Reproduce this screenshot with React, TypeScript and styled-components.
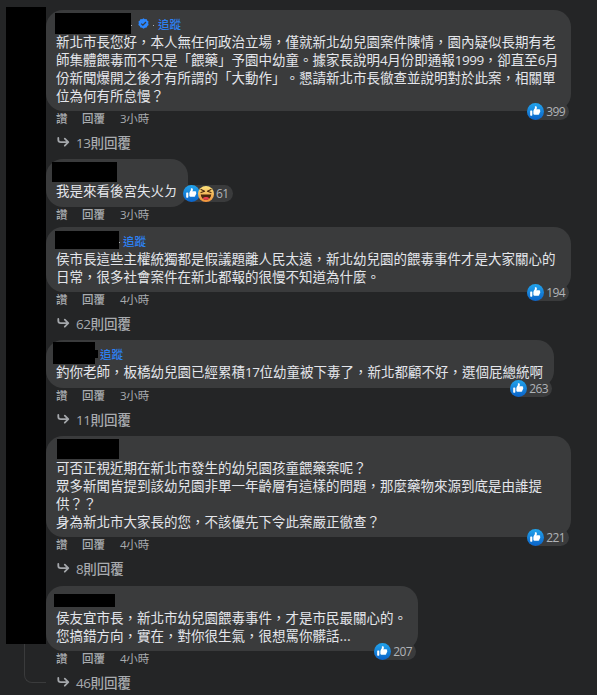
import styled, { createGlobalStyle } from "styled-components";

type Redact = { x: number; y: number; w: number; h: number };

type CommentData = {
  id: number;
  width: number;
  redact: Redact;
  notch?: boolean;
  verified?: boolean;
  dot?: boolean;
  follow?: boolean;
  lines: string[];
  time: string;
  likes: number;
  haha?: boolean;
  replies?: number;
};

const comments: CommentData[] = [
  {
    id: 1,
    width: 525,
    redact: { x: 9, y: 3, w: 76, h: 21 },
    verified: true,
    dot: true,
    follow: true,
    lines: [
      "新北市長您好，本人無任何政治立場，僅就新北幼兒園案件陳情，園內疑似長期有老",
      "師集體餵毒而不只是「餵藥」予園中幼童。據家長說明4月份即通報1999，卻直至6月",
      "份新聞爆開之後才有所謂的「大動作」。懇請新北市長徹查並說明對於此案，相關單",
      "位為何有所怠慢？",
    ],
    time: "3小時",
    likes: 399,
    replies: 13,
  },
  {
    id: 2,
    width: 142,
    redact: { x: 6, y: 3, w: 65, h: 20 },
    lines: ["我是來看後宮失火ㄉ"],
    time: "3小時",
    likes: 61,
    haha: true,
  },
  {
    id: 3,
    width: 525,
    redact: { x: 9, y: 4, w: 64, h: 18 },
    dot: true,
    follow: true,
    lines: [
      "侯市長這些主權統獨都是假議題離人民太遠，新北幼兒園的餵毒事件才是大家關心的",
      "日常，很多社會案件在新北都報的很慢不知道為什麼。",
    ],
    time: "4小時",
    likes: 194,
    replies: 62,
  },
  {
    id: 4,
    width: 508,
    redact: { x: 7, y: 2, w: 42, h: 22 },
    notch: true,
    follow: true,
    lines: ["釣你老師，板橋幼兒園已經累積17位幼童被下毒了，新北都顧不好，選個屁總統啊"],
    time: "3小時",
    likes: 263,
    replies: 11,
  },
  {
    id: 5,
    width: 525,
    redact: { x: 11, y: 3, w: 62, h: 20 },
    lines: [
      "可否正視近期在新北市發生的幼兒園孩童餵藥案呢？",
      "眾多新聞皆提到該幼兒園非單一年齡層有這樣的問題，那麼藥物來源到底是由誰提",
      "供？？",
      "身為新北市大家長的您，不該優先下令此案嚴正徹查？",
    ],
    time: "4小時",
    likes: 221,
    replies: 8,
  },
  {
    id: 6,
    width: 372,
    redact: { x: 8, y: 8, w: 61, h: 13 },
    lines: [
      "侯友宜市長，新北市幼兒園餵毒事件，才是市民最關心的。",
      "您搞錯方向，實在，對你很生氣，很想罵你髒話...",
    ],
    time: "4小時",
    likes: 207,
    replies: 46,
  },
];

export default function App() {
  return (
    <>
      <GlobalStyle />
      <Page>
        <Side>
          <AvatarBlock />
          <ThreadLine />
        </Side>
        <List>
          {comments.map((c) => (
            <Comment key={c.id} data={c} />
          ))}
        </List>
      </Page>
    </>
  );
}

function Comment({ data }: { data: CommentData }) {
  return (
    <Item $last={data.id === 5}>
      <Bubble $width={data.width}>
        <Header>
          <Name $r={data.redact}>{data.notch && <Notch />}</Name>
          {data.dot && <Dot />}
          {data.verified && (
            <>
              <VerifiedIcon />
              <Dot />
            </>
          )}
          {data.follow && <Follow>追蹤</Follow>}
        </Header>
        {data.lines.map((line) => (
          <Line key={line}>
            <Mixed text={line} />
          </Line>
        ))}
        <Reactions $side={data.haha}>
          <LikeIcon id={data.id} />
          {data.haha && <HahaIcon />}
          <Count>{data.likes}</Count>
        </Reactions>
      </Bubble>
      <Meta>
        <Action $w={26}>讚</Action>
        <Action $w={38}>回覆</Action>
        <span>
          <Mixed text={data.time} />
        </span>
      </Meta>
      {data.replies ? (
        <Replies>
          <ArrowIcon />
          <span>
            <Mixed text={`${data.replies}則回覆`} />
          </span>
        </Replies>
      ) : (
        <Spacer />
      )}
    </Item>
  );
}

// Digits use a narrower latin face than the CJK text around them
function Mixed({ text }: { text: string }) {
  return (
    <>
      {text
        .split(/(\d+)/)
        .map((part, i) => (/^\d+$/.test(part) ? <Num key={i}>{part}</Num> : part))}
    </>
  );
}

function VerifiedIcon() {
  return (
    <Verified viewBox="0 0 12 12">
      <path
        fill="#2d88ff"
        d="M6 .4 7.5 1.3 9.3 1.2 10 2.8 11.5 3.9 11.1 5.7 11.6 7.5 10.2 8.7 9.5 10.4 7.7 10.5 6 11.6 4.4 10.5 2.6 10.4 1.9 8.7.4 7.5.9 5.7.5 3.9 2 2.8 2.8 1.2 4.5 1.3Z"
      />
      <path d="M3.5 6.1 5.3 7.8 8.7 4.3" fill="none" stroke="#3a3b3c" strokeWidth="1.4" />
    </Verified>
  );
}

function LikeIcon({ id }: { id: number }) {
  return (
    <Face viewBox="0 0 16 16">
      <defs>
        <linearGradient id={`like${id}`} x1="0" y1="0" x2="0" y2="1">
          <stop offset="0" stopColor="#22a4ec" />
          <stop offset="1" stopColor="#0a62c8" />
        </linearGradient>
      </defs>
      <circle cx="8" cy="8" r="8" fill={`url(#like${id})`} />
      <path
        fill="#fff"
        d="M12.162 7.338c.176.123.338.245.338.674 0 .43-.229.604-.474.725.1.163.132.36.089.546-.077.344-.392.611-.672.69.121.194.159.385.015.62-.185.295-.346.407-1.058.407H7.5c-.988 0-1.5-.546-1.5-1V7.665c0-1.23 1.467-2.275 1.467-3.13L7.361 3.47c-.005-.065.008-.224.058-.27.08-.079.301-.2.635-.2.218 0 .363.041.534.123.581.277.732.978.732 1.542 0 .271-.414 1.083-.47 1.364 0 0 .867-.192 1.879-.199 1.061-.006 1.749.19 1.749.842 0 .261-.219.523-.316.666zM3.6 7h.8a.6.6 0 0 1 .6.6v3.8a.6.6 0 0 1-.6.6h-.8a.6.6 0 0 1-.6-.6V7.6a.6.6 0 0 1 .6-.6z"
      />
    </Face>
  );
}

function HahaIcon() {
  return (
    <Face viewBox="0 0 16 16" $over>
      <defs>
        <linearGradient id="haha" x1="0" y1="0" x2="0" y2="1">
          <stop offset="0" stopColor="#fbe27c" />
          <stop offset="1" stopColor="#f0913a" />
        </linearGradient>
      </defs>
      <circle cx="8" cy="8" r="8" fill="url(#haha)" />
      <path d="M2.8 8.2c.2 3.6 2.6 5.6 5.2 5.6s5-2 5.2-5.6c-1.5.5-8.9.5-10.4 0Z" fill="#4b280e" />
      <path d="M4.7 12.2c1.6-1.7 5-1.7 6.6 0-1.6 2.1-5 2.1-6.6 0Z" fill="#e8404f" />
      <path
        d="M3 3.4 6.6 5.2 3 6.6M13 3.4 9.4 5.2 13 6.6"
        fill="none"
        stroke="#4b280e"
        strokeWidth="1.1"
        strokeLinecap="round"
        strokeLinejoin="round"
      />
    </Face>
  );
}

function ArrowIcon() {
  return (
    <Arrow viewBox="0 0 13 12">
      <path
        d="M1.3 2V3.8Q1.300 6.200 3.800 6.200H11M7.800 2.700 11.300 6.200 7.800 9.700"
        fill="none"
        stroke="#a4a7ab"
        strokeWidth="1.8"
        strokeLinejoin="round"
        strokeLinecap="round"
      />
    </Arrow>
  );
}

const GlobalStyle = createGlobalStyle`
  body {
    margin: 0;
    background: #242526;
    font-family: "Noto Sans CJK TC", sans-serif;
    text-spacing-trim: space-all;
  }
`;

const Page = styled.div`
  display: flex;
  box-sizing: border-box;
  height: 695px;
  padding: 7px 0 0 6px;
  overflow: hidden;
  background: #242526;
`;

const Side = styled.div`
  display: flex;
  flex-direction: column;
  align-items: flex-end;
  width: 40px;
`;

const AvatarBlock = styled.div`
  width: 40px;
  height: 637px;
  background: #000;
`;

const ThreadLine = styled.div`
  box-sizing: border-box;
  width: 22px;
  height: 39px;
  border: solid #3a3b3c;
  border-width: 0 0 1px 1px;
  border-bottom-left-radius: 8px;
`;

const List = styled.div`
  padding-top: 3px;
`;

const Item = styled.div<{ $last?: boolean }>`
  margin-bottom: ${(p) => (p.$last ? "1px" : 0)};
`;

const Bubble = styled.div<{ $width: number }>`
  position: relative;
  box-sizing: border-box;
  width: ${(p) => p.$width}px;
  min-height: 48px;
  padding: 0 0 7px 10px;
  border-radius: 17px;
  background: #3a3b3c;
`;

const Header = styled.div`
  display: flex;
  align-items: flex-start;
  height: 22px;
  margin-left: -10px;
`;

const Name = styled.div<{ $r: Redact }>`
  display: flex;
  justify-content: flex-end;
  align-items: center;
  flex-shrink: 0;
  width: ${(p) => p.$r.w}px;
  height: ${(p) => p.$r.h}px;
  margin: ${(p) => p.$r.y}px 0 0 ${(p) => p.$r.x}px;
  background: #000;
`;

const Notch = styled.div`
  flex-shrink: 0;
  width: 3px;
  height: 8px;
  margin: 2px -3px 0 0;
  background: #000;
`;

const Dot = styled.span`
  width: 1px;
  height: 1px;
  margin: 15px 1px 0 0;
  background: #b0b3b8;

  svg + & {
    margin: 15px 2px 0 4px;
  }
`;

const Verified = styled.svg`
  width: 11px;
  height: 11px;
  margin: 8px 0 0 5px;
`;

const Follow = styled.span`
  margin: 6px 0 0 2px;
  font-size: 11.5px;
  font-weight: 500;
  line-height: 17px;
  color: #2d80f0;

  div + & {
    margin-left: 5px;
  }
`;

const Line = styled.div`
  height: 18px;
  font-size: 13.5px;
  line-height: 18px;
  white-space: nowrap;
  color: #e4e6eb;
`;

const Num = styled.span`
  font-family: "Open Sans", sans-serif;
  letter-spacing: -0.035em;
  line-height: 1;
`;

const Reactions = styled.div<{ $side?: boolean }>`
  position: absolute;
  display: flex;
  align-items: center;
  box-sizing: border-box;
  height: 17px;
  padding-right: 4px;
  border-radius: 9px;
  background: #3a3b3c;
  ${(p) => (p.$side ? "left: 137px; bottom: 5px;" : "right: 2px; bottom: -9px;")}
`;

const Face = styled.svg<{ $over?: boolean }>`
  width: ${(p) => (p.$over ? 16 : 17)}px;
  height: ${(p) => (p.$over ? 16 : 17)}px;
  margin-left: ${(p) => (p.$over ? "-2px" : 0)};
`;

const Count = styled.span`
  margin-left: 2px;
  font-family: "Open Sans", sans-serif;
  font-size: 12px;
  letter-spacing: -0.6px;
  line-height: 17px;
  color: #b0b3b8;
`;

const Meta = styled.div`
  display: flex;
  height: 15px;
  padding-left: 10px;
  font-size: 11.5px;
  line-height: 15px;
  color: #a8abaf;
`;

const Action = styled.span<{ $w: number }>`
  width: ${(p) => p.$w}px;
  font-weight: 500;
`;

const Replies = styled.div`
  display: flex;
  align-items: center;
  box-sizing: border-box;
  height: 33px;
  padding: 0 0 2px 11px;
  font-size: 13.5px;
  font-weight: 500;
  line-height: 18px;
  color: #a8abaf;
`;

const Arrow = styled.svg`
  width: 13px;
  height: 12px;
  margin-right: 6px;
`;

const Spacer = styled.div`
  height: 5px;
`;
